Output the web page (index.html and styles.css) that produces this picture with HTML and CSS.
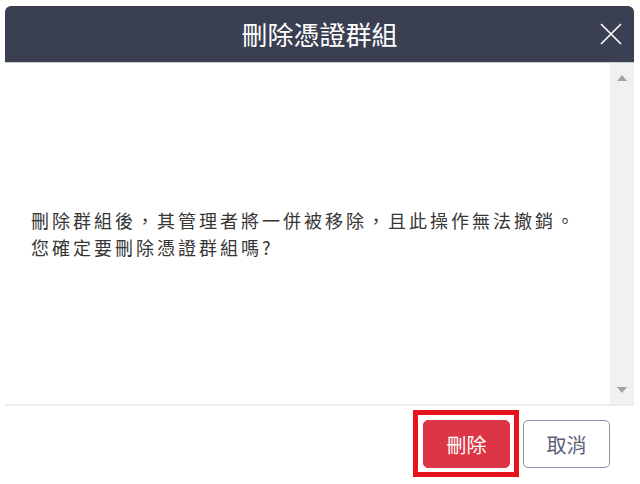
FILE: index.html
```html
<!DOCTYPE html>
<html lang="zh-Hant">
<head>
<meta charset="utf-8">
<link rel="stylesheet" href="styles.css">
</head>
<body>
<div class="dialog">
  <div class="dialog-header">
    <span class="spacer"></span>
    <h1 class="dialog-title">刪除憑證群組</h1>
    <button class="close-btn" aria-label="close">
      <svg width="22" height="22" viewBox="0 0 22 22"><path d="M1 1 L21 21 M21 1 L1 21" stroke="#ffffff" stroke-width="1.6" fill="none"/></svg>
    </button>
  </div>
  <div class="dialog-body">
    <div class="body-content">
      <p class="message">刪除群組後，其管理者將一併被移除，且此操作無法撤銷。<br>您確定要刪除憑證群組嗎?</p>
    </div>
    <div class="scrollbar">
      <span class="arrow up"></span>
      <span class="arrow down"></span>
    </div>
  </div>
  <div class="dialog-footer">
    <div class="focus-ring">
      <button class="btn btn-danger">刪除</button>
    </div>
    <button class="btn btn-cancel">取消</button>
  </div>
</div>
</body>
</html>
```
FILE: styles.css
```css
html, body {
  margin: 0;
  padding: 0;
  background: #ffffff;
}
body {
  font-family: "Noto Sans CJK TC", "Noto Sans", sans-serif;
  padding: 6px 6px 2px 5px;
}
.dialog {
  width: 629px;
  height: 476px;
  display: flex;
  flex-direction: column;
  background: #ffffff;
}
.dialog-header {
  height: 56px;
  background: #3a3f51;
  border-radius: 6px 6px 0 0;
  border-bottom: 1px solid #c9cbd2;
  display: grid;
  grid-template-columns: 1fr auto 1fr;
  align-items: center;
}
.dialog-title {
  margin: 0;
  color: #ffffff;
  font-size: 26px;
  font-weight: 400;
  line-height: 30px;
}
.close-btn {
  justify-self: end;
  margin-right: 12px;
  background: none;
  border: none;
  padding: 0;
  width: 22px;
  height: 22px;
  display: flex;
}
.dialog-body {
  flex: 0 0 341px;
  display: flex;
  border-bottom: 2px solid #ebebf0;
}
.body-content {
  flex: 1;
  display: flex;
  align-items: center;
  padding-left: 26px;
}
.message {
  margin: 0;
  font-size: 18px;
  line-height: 27px;
  letter-spacing: 3px;
  color: #363636;
}
.scrollbar {
  width: 24px;
  background: #f1f1f1;
  display: flex;
  flex-direction: column;
  justify-content: space-between;
  align-items: center;
  padding: 12px 0 11px;
}
.arrow {
  width: 0;
  height: 0;
  border-left: 5px solid transparent;
  border-right: 5px solid transparent;
}
.arrow.up {
  border-bottom: 6px solid #a3a3a3;
}
.arrow.down {
  border-top: 6px solid #a3a3a3;
}
.dialog-footer {
  display: flex;
  justify-content: flex-end;
  align-items: flex-start;
  padding: 4px 24px 0 0;
}
.focus-ring {
  border: 5px solid #e8141c;
  padding: 5px 4px 4px 5px;
  margin-right: 4px;
  display: flex;
}
.btn {
  width: 87px;
  height: 48px;
  border-radius: 5px;
  font-family: "Noto Sans CJK TC", "Noto Sans", sans-serif;
  font-size: 20px;
  padding: 0;
  cursor: pointer;
}
.btn-danger {
  background: #dc3545;
  border: 1px solid #dc3545;
  color: #ffffff;
}
.btn-cancel {
  margin-top: 10px;
  background: #ffffff;
  border: 1px solid #8c92aa;
  color: #5b6177;
}
```
